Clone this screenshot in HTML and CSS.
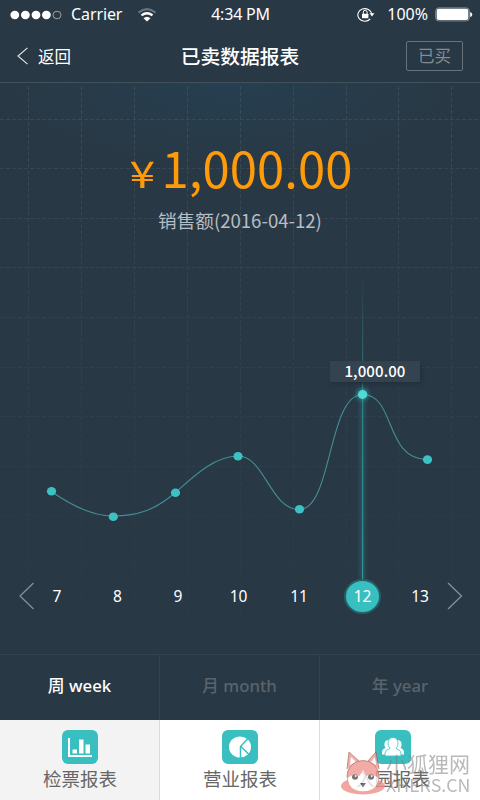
FILE: index.html
```html
<!DOCTYPE html>
<html lang="zh-CN">
<head>
<meta charset="utf-8">
<title>已卖数据报表</title>
<link rel="stylesheet" href="styles.css">
</head>
<body>
<div class="app">
  <header class="top">
    <div class="status">
      <div class="carrier">
        <svg width="52" height="10" viewBox="0 0 52 10"><g fill="#fff"><ellipse cx="4.8" cy="5" rx="4.4" ry="4.2"/><ellipse cx="15.4" cy="5" rx="4.4" ry="4.2"/><ellipse cx="26" cy="5" rx="4.4" ry="4.2"/><ellipse cx="36.4" cy="5" rx="4.4" ry="4.2"/></g><ellipse cx="47" cy="5" rx="4" ry="3.8" fill="none" stroke="#c4cbd0" stroke-width=".7"/></svg>
        <span class="name">Carrier</span>
        <svg class="wifi" width="20" height="14" viewBox="0 0 20 14"><g fill="none" stroke-width="2"><path d="M1.500 4.600Q10-2.300 18.500 4.600" stroke="#68757f"/><path d="M4.500 7.400Q10 3 15.500 7.400" stroke="#fff" stroke-width="2.300"/></g><path d="M6.500 10.300Q10 7.300 13.500 10.300L10 13.500Z" fill="#fff"/></svg>
      </div>
      <span class="time">4:34 PM</span>
      <div class="power">
        <svg width="18" height="16" viewBox="0 0 18 16"><path d="M13.200 12A7 6.300 0 1 1 14.800 7" fill="none" stroke="#fff" stroke-width="1.100"/><path d="M12.500 6.300h5L15 9.500z" fill="#fff"/><rect x="5" y="6.700" width="6.400" height="4.600" rx=".6" fill="#fff"/><path d="M6.300 7V5.200a1.900 1.900 0 0 1 3.800 0V7" fill="none" stroke="#fff"/></svg>
        <span class="pct">100%</span>
        <svg width="38" height="15" viewBox="0 0 38 15"><rect x=".7" y=".9" width="33.600" height="13" rx="3" fill="none" stroke="#9aa5ac" stroke-width=".8"/><rect x="1.700" y="1.800" width="31.600" height="11.200" rx="2" fill="#fff"/><path d="M35.200 5Q37.300 5.500 37.300 7.500T35.200 10z" fill="#fff"/></svg>
      </div>
    </div>
    <nav class="nav">
      <a class="back"><svg width="12" height="18" viewBox="0 0 12 18"><path d="M10.500.8L1 9l9.500 8.200" fill="none" stroke="#e5e9ec" stroke-width="1.100"/></svg><span>返回</span></a>
      <h1>已卖数据报表</h1>
      <a class="bought">已买</a>
    </nav>
  </header>

  <main class="report">
    <svg class="grid" width="480" height="571" viewBox="0 0 480 571">
      <defs><linearGradient id="gfade" x1="0" y1="0" x2="0" y2="1"><stop offset="0" stop-color="#fff" stop-opacity=".8"/><stop offset=".4" stop-color="#fff" stop-opacity=".5"/><stop offset=".7" stop-color="#fff" stop-opacity=".25"/><stop offset="1" stop-color="#fff" stop-opacity=".08"/></linearGradient><mask id="gm"><rect width="480" height="571" fill="url(#gfade)"/></mask></defs>
      <path mask="url(#gm)" fill="none" stroke="#3c4f5b" stroke-width="1" stroke-dasharray="4 2" d="M28.500 3V571M81.500 3V571M134.500 3V571M187.500 3V571M240.500 3V571M293.500 3V571M346.500 3V571M398.500 3V571M451.500 3V571M0 36.500H480M0 85.500H480M0 135.500H480M0 184.500H480M0 234.500H480M0 284.500H480M0 333.500H480M0 383.500H480M0 432.500H480M0 482.500H480"/>
    </svg>
    <div class="amount"><span class="yen">¥</span><span class="value">1,000.00</span></div>
    <p class="caption">销售额(2016-04-12)</p>
    <section class="chart">
      <svg width="480" height="305" viewBox="0 275 480 305">
        <defs>
          <linearGradient id="beam" gradientUnits="userSpaceOnUse" x1="0" y1="275" x2="0" y2="580"><stop offset="0" stop-color="#38a9ac" stop-opacity="0"/><stop offset=".35" stop-color="#38a9ac" stop-opacity=".5"/><stop offset="1" stop-color="#38b4b5" stop-opacity=".7"/></linearGradient>
          <filter id="glow" x="-200%" y="-100%" width="500%" height="300%"><feGaussianBlur stdDeviation="2"/></filter>
        </defs>
        <rect x="360.500" y="400" width="4" height="180" fill="#2f8288" opacity=".5" filter="url(#glow)"/>
        <rect x="362" y="275" width="1.200" height="305" fill="url(#beam)"/>
        <path d="M51.500 491.500C72 506 92 516 113 516C138 516 155 510 175.500 492.500C195 475 215 456 238 456C265 456 270 509.500 299.500 509.500C332 509.500 328 394.500 362.500 394.500C396 394.500 384 459.500 427.500 459.500" fill="none" stroke="#428e93" stroke-width="1.100"/>
        <circle cx="362.500" cy="394.500" r="6" fill="#37c4c4" opacity=".6" filter="url(#glow)"/>
        <g fill="#3dc2c4"><ellipse cx="51.500" cy="491.300" rx="4.600" ry="4.300"/><ellipse cx="113.300" cy="516.700" rx="4.600" ry="4.300"/><ellipse cx="175.500" cy="492.700" rx="4.600" ry="4.300"/><ellipse cx="238" cy="456.200" rx="4.600" ry="4.300"/><ellipse cx="299.500" cy="509.200" rx="4.600" ry="4.300"/><ellipse cx="362.600" cy="394.500" rx="4.700" ry="4.400" fill="#51dbd7"/><ellipse cx="427.500" cy="459.600" rx="4.600" ry="4.300"/></g>
      </svg>
      <span class="tip">1,000.00</span>
    </section>
    <div class="days">
      <svg width="16" height="28" viewBox="0 0 16 28"><path d="M14.500 1L1 14l13.500 13" fill="none" stroke="#84909a" stroke-width="1.300"/></svg>
      <div class="list"><span>7</span><span>8</span><span>9</span><span>10</span><span>11</span><span class="on"><b>12</b></span><span>13</span></div>
      <svg width="16" height="28" viewBox="0 0 16 28"><path d="M1 1l13.500 13L1 27" fill="none" stroke="#84909a" stroke-width="1.300"/></svg>
    </div>
  </main>

  <div class="period"><a class="active">周 week</a><a>月 month</a><a>年 year</a></div>

  <footer class="tabs">
    <a class="current">
      <svg width="36" height="34" viewBox="0 0 36 34"><rect width="36" height="34" rx="6" fill="#3abfc1"/><path d="M7 8v18h23" fill="none" stroke="#fff" stroke-width="2"/><path d="M10.500 19.500h4.500V23.500h-4.500zM17 9.500h4.500v14H17zM23.500 14.500h4.500v9h-4.500z" fill="#fff"/></svg>
      <span>检票报表</span>
    </a>
    <a class="trade">
      <svg width="36" height="34" viewBox="0 0 36 34"><rect width="36" height="34" rx="6" fill="#3abfc1"/><ellipse cx="18" cy="17" rx="11" ry="10.500" fill="#fff"/><path d="M26.500 8L18.500 16.500V28M19 16.500l8.500 8.500" fill="none" stroke="#3abfc1" stroke-width="1.500"/></svg>
      <span>营业报表</span>
    </a>
    <a class="park">
      <svg width="36" height="34" viewBox="0 0 36 34"><rect width="36" height="34" rx="6" fill="#3abfc1"/><path d="M7 24.500V22q0-2.500 3.500-4-1.500-2-1-4.500.5-3.500 4-3.500h9q3.500 0 4 3.500.5 2.500-1 4.500 3.500 1.500 3.500 4v2.500z" fill="#fff"/><path d="M10 26v-3q0-3 5-4.500-2.500-3-2-6Q13.500 7.500 18 7.500t5 5q.5 3-2 6 5 1.500 5 4.500v3z" fill="#fff" stroke="#3abfc1" stroke-width=".8"/></svg>
      <span>入园报表</span>
    </a>
  </footer>
  <div class="mark">
    <svg width="46" height="46" viewBox="0 0 46 46"><ellipse cx="23" cy="36" rx="22" ry="8.500" fill="#ee9089"/><path d="M7 19L9 2l11 10M27 12L36 2l3 17" fill="#f19c95" stroke="#9c5552" stroke-width=".8"/><path d="M10 15l1-8 5 5M31 12l4-5 1 8" fill="#fff"/><ellipse cx="23" cy="26" rx="16" ry="15.500" fill="#f19790" stroke="#9c5f5c" stroke-width=".8"/><path d="M7.500 28q8-6 12-2l3.500-6 3.500 6q5-4 12 2-1 13-15.500 13.500Q9 41 7.500 28z" fill="#fff"/><g fill="#555"><ellipse cx="15" cy="27" rx="3" ry="2.700"/><ellipse cx="31" cy="27" rx="3" ry="2.700"/><path d="M20 33h6l-3 4.500z"/></g><g fill="#fff"><circle cx="15.700" cy="26" r=".9"/><circle cx="31.700" cy="26" r=".9"/></g></svg>
    <div class="words"><span>小狐狸网</span><span class="site">XHERS.CN</span></div>
  </div>
</div>
</body>
</html>
```
FILE: styles.css
```css
* { box-sizing: border-box; }
body { margin: 0; font-family: "Noto Sans CJK SC", sans-serif; }
svg { display: block; flex: none; }
.app { position: relative; width: 480px; height: 800px; overflow: hidden; display: flex; flex-direction: column; background: #293845; color: #fff; }
.top { height: 83px; border-bottom: 1px solid #40515e; }
.status { height: 29px; display: grid; grid-template-columns: 1fr auto 1fr; align-items: center; font-family: "Noto Sans", sans-serif; font-size: 16px; line-height: 29px; }
.carrier { display: flex; align-items: center; padding-left: 10px; }
.name { margin-left: 9px; letter-spacing: -.1px; }
.wifi { margin-left: 15px; }
.time { letter-spacing: -.2px; padding-left: 1px; }
.power { display: flex; align-items: center; justify-content: flex-end; padding-right: 7px; }
.pct { margin: 0 7px 0 12px; }
.nav { height: 53px; display: grid; grid-template-columns: 1fr auto 1fr; align-items: center; padding: 0 17px; }
.back { display: flex; align-items: center; gap: 9px; font-size: 16.5px; }
h1 { margin: 0; font-size: 19.8px; font-weight: 500; line-height: 29px; }
.bought { justify-self: end; width: 57px; height: 30px; border: 1px solid #66737d; border-radius: 2px; color: #858b90; font-size: 16.5px; line-height: 27px; text-align: center; }
.report { position: relative; height: 571px; flex: none; background: radial-gradient(ellipse 230px 85px at 48% 0, #263f50, #293845); }
.grid { position: absolute; inset: 0; }
.amount { position: relative; display: flex; justify-content: center; align-items: baseline; height: 117px; padding-top: 49px; color: #ff9b09; line-height: 70px; }
.yen { font-size: 37px; width: 21px; margin-left: 5px; margin-right: 8px; transform: scaleX(1.25); }
.value { font-size: 49px; letter-spacing: .1px; }
.caption { position: relative; margin: 0; height: 40px; line-height: 40px; text-align: center; font-size: 18.6px; color: #b6bdc4; }
.chart { position: relative; height: 305px; margin-top: 35px; }
.tip { position: absolute; left: 330px; top: 86px; width: 90px; height: 21px; background: #33434f; box-shadow: 2px 2px 3px #23313d; text-align: center; font-size: 15px; font-weight: 500; line-height: 19px; letter-spacing: .1px; }
.days { position: relative; margin-top: -6px; height: 44px; display: flex; gap: 5px; padding-left: 19px; align-items: center; font-family: "Noto Sans", sans-serif; font-size: 15.5px; line-height: 24px; text-align: center; }
.list { width: 407px; display: grid; grid-template-columns: repeat(7, 44px); column-gap: 16.5px; align-items: center; margin-left: -5px; }
.on { display: flex; justify-content: center; padding-left: 6px; }
.on b { flex: none; width: 37px; height: 35px; border: 2px solid #276168; border-radius: 50%; background: #3abfc1; font-weight: 400; line-height: 30px; }
.period { height: 66px; flex: none; display: grid; grid-template-columns: 159px 160px 161px; border-top: 1px solid #33444f; font: 500 16.8px/62px "Noto Sans", "Noto Sans CJK SC", sans-serif; text-align: center; color: #5a646b; }
.period a + a { border-left: 1px solid #33444f; }
.period .active { color: #fff; }
.tabs { height: 80px; flex: none; display: grid; grid-template-columns: 159px 160px 161px; background: #fff; color: #666; font-size: 18.5px; }
.tabs a { display: flex; flex-direction: column; align-items: center; padding-top: 10px; line-height: 28px; }
.tabs a + a { border-left: 1px solid #d9dcde; }
.tabs .current { background: #f3f3f3; padding-left: 1px; }
.tabs .trade { padding-left: 1px; }
.tabs .park { padding-right: 14px; }
.mark { position: absolute; left: 340px; top: 750px; display: flex; }
.mark svg { opacity: .8; }
.words { opacity: .55; color: #808080; font-size: 21px; line-height: 27px; display: flex; flex-direction: column; }
.site { font-size: 17.8px; line-height: 14px; }
```
